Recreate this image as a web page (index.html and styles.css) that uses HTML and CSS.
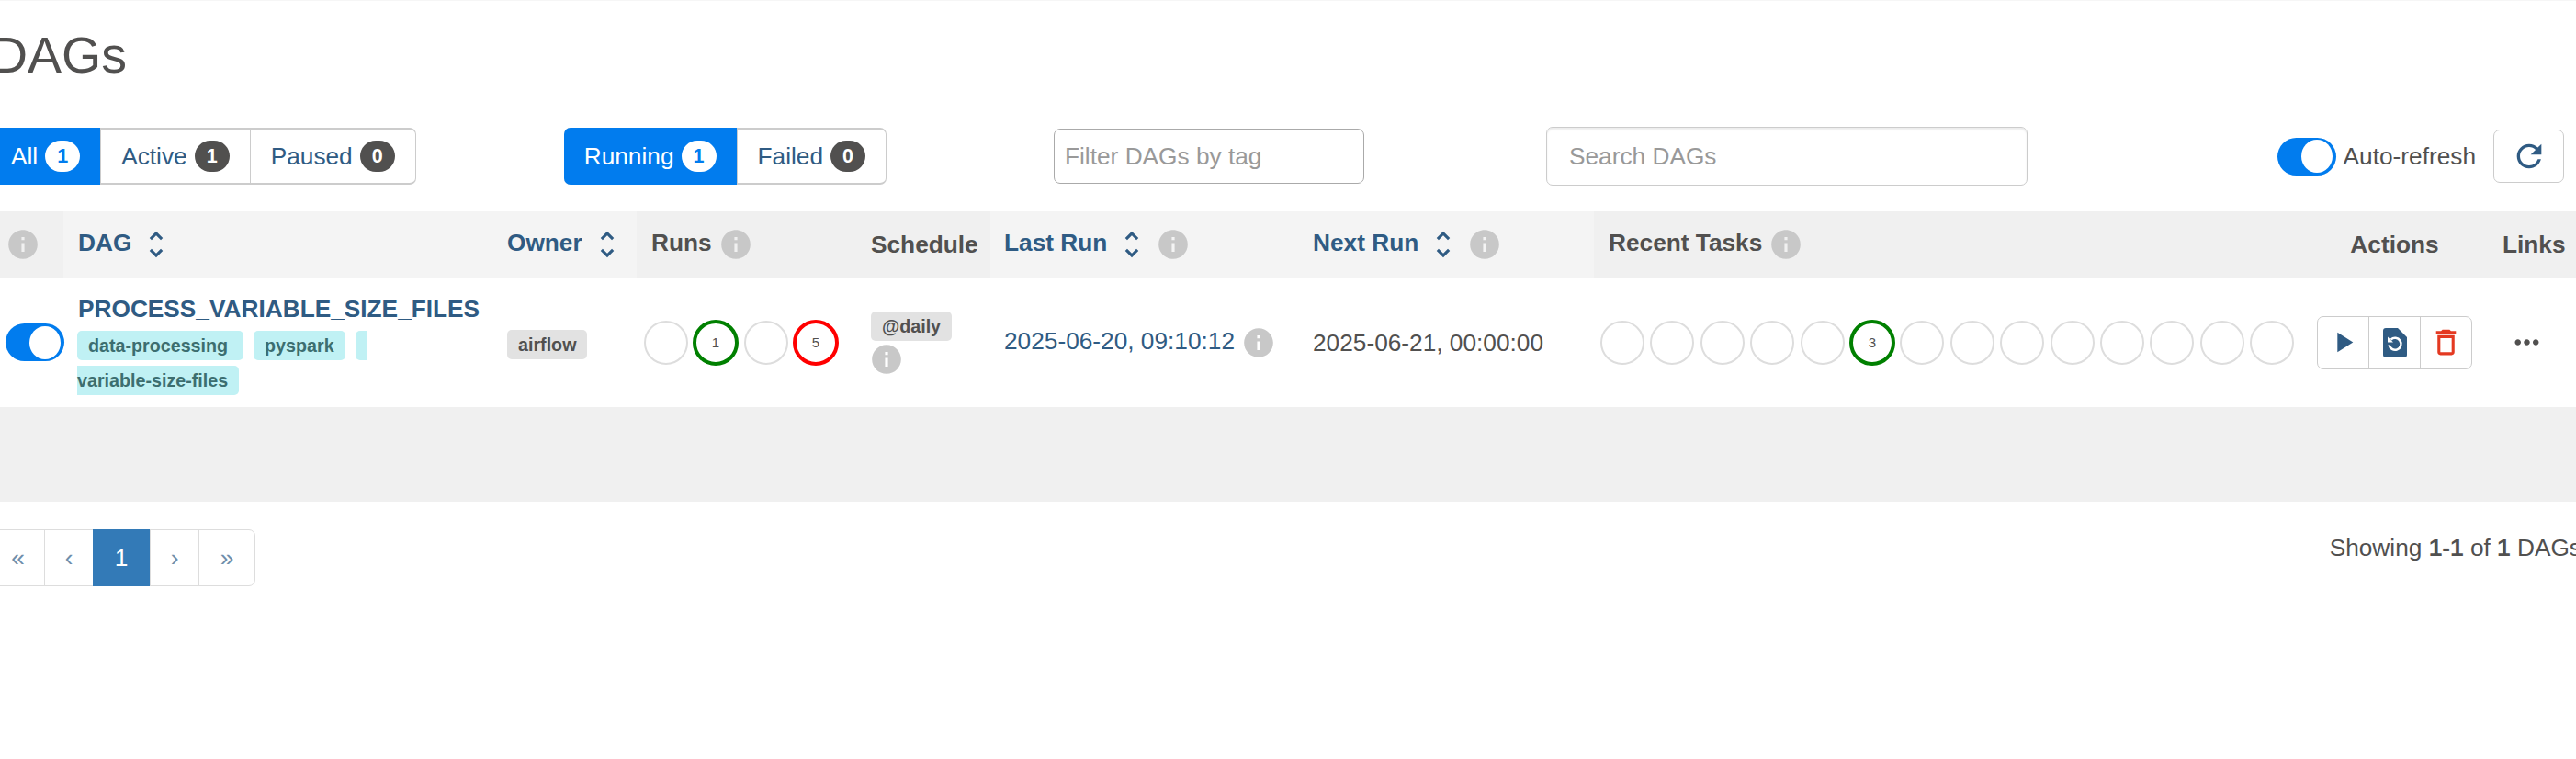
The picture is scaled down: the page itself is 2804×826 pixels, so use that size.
FILE: index.html
```html
<!DOCTYPE html>
<html lang="en">
<head>
    <meta charset="utf-8" />
    <title>DAGs</title>
    <link rel="stylesheet" href="styles.css">
</head>
<body>
    <svg class="defs" width="0" height="0">
        <symbol id="i-info" viewBox="0 0 24 24"><path fill-rule="evenodd" d="M12 2C6.48 2 2 6.48 2 12s4.48 10 10 10 10-4.48 10-10S17.52 2 12 2zm1 15h-2v-6h2v6zm0-8h-2V7h2v2z" /></symbol>
        <symbol id="i-sort" viewBox="0 0 24 24"><path d="M12 5.83L15.17 9l1.41-1.41L12 3 7.41 7.59 8.83 9 12 5.83zm0 12.34L8.83 15l-1.41 1.41L12 21l4.59-4.59L15.17 15 12 18.17z" /></symbol>
    </svg>
    <main class="page">
        <h2 class="title">DAGs</h2>
        <div class="toolbar">
            <div class="btn-group status-group">
                <a class="btn active">All <span class="count">1</span></a>
                <a class="btn">Active <span class="count">1</span></a>
                <a class="btn">Paused <span class="count">0</span></a>
            </div>
            <div class="btn-group state-group">
                <a class="btn active">Running <span class="count">1</span></a>
                <a class="btn">Failed <span class="count">0</span></a>
            </div>
            <input class="input tag-filter" placeholder="Filter DAGs by tag">
            <input class="input dag-search" placeholder="Search DAGs">
            <label class="auto-refresh"><span class="switch"><span class="knob"></span></span>Auto-refresh</label>
            <a class="refresh-btn">
                <svg width="40" height="40" viewBox="0 0 24 24"><path d="M17.65 6.35A7.958 7.958 0 0012 4c-4.42 0-7.99 3.58-7.99 8s3.57 8 7.99 8c3.73 0 6.84-2.55 7.73-6h-2.08A5.99 5.99 0 0112 18c-3.31 0-6-2.69-6-6s2.69-6 6-6c1.66 0 3.14.69 4.22 1.78L13 11h7V4l-2.35 2.35z" /></svg>
            </a>
        </div>
        <table class="dags">
            <colgroup>
                <col class="c-toggle"><col class="c-dag"><col class="c-owner"><col class="c-runs"><col class="c-schedule">
                <col class="c-last"><col class="c-next"><col class="c-tasks"><col class="c-actions"><col class="c-links">
            </colgroup>
            <thead>
                <tr>
                    <th><svg class="info"><use href="#i-info" /></svg></th>
                    <th class="sortable"><a>DAG</a><svg class="sort"><use href="#i-sort" /></svg></th>
                    <th class="sortable"><a>Owner</a><svg class="sort"><use href="#i-sort" /></svg></th>
                    <th>Runs<svg class="info"><use href="#i-info" /></svg></th>
                    <th class="plain">Schedule</th>
                    <th class="sortable run-col"><a>Last Run</a><svg class="sort"><use href="#i-sort" /></svg><svg class="info"><use href="#i-info" /></svg></th>
                    <th class="sortable run-col"><a>Next Run</a><svg class="sort"><use href="#i-sort" /></svg><svg class="info"><use href="#i-info" /></svg></th>
                    <th>Recent Tasks<svg class="info"><use href="#i-info" /></svg></th>
                    <th class="plain centered">Actions</th>
                    <th class="plain">Links</th>
                </tr>
            </thead>
            <tbody>
                <tr>
                    <td><span class="switch"><span class="knob"></span></span></td>
                    <td class="dag-cell">
                        <a class="dag-name">PROCESS_VARIABLE_SIZE_FILES</a>
                        <div class="tags">
                            <span class="tag tag-wide">data-processing</span>
                            <span class="tag">pyspark</span>
                            <span class="tag tag-start"></span>
                            <span class="tag tag-end">variable-size-files</span>
                        </div>
                    </td>
                    <td><span class="label">airflow</span></td>
                    <td class="states">
                        <div class="circles">
                            <svg class="state" viewBox="0 0 50 50"><circle class="idle" cx="25" cy="25" r="23" /></svg>
                            <svg class="state" viewBox="0 0 50 50"><circle class="success" cx="25" cy="25" r="23" /><text x="25" y="30">1</text></svg>
                            <svg class="state" viewBox="0 0 50 50"><circle class="idle" cx="25" cy="25" r="23" /></svg>
                            <svg class="state" viewBox="0 0 50 50"><circle class="failed" cx="25" cy="25" r="23" /><text x="25" y="30">5</text></svg>
                        </div>
                    </td>
                    <td class="schedule-cell"><span class="label">@daily</span><svg class="info"><use href="#i-info" /></svg></td>
                    <td class="date"><a>2025-06-20, 09:10:12</a><svg class="info"><use href="#i-info" /></svg></td>
                    <td class="date">2025-06-21, 00:00:00</td>
                    <td class="states tasks">
                        <div class="circles">
                            <svg class="state" viewBox="0 0 50 50"><circle class="idle" cx="25" cy="25" r="23" /></svg>
                            <svg class="state" viewBox="0 0 50 50"><circle class="idle" cx="25" cy="25" r="23" /></svg>
                            <svg class="state" viewBox="0 0 50 50"><circle class="idle" cx="25" cy="25" r="23" /></svg>
                            <svg class="state" viewBox="0 0 50 50"><circle class="idle" cx="25" cy="25" r="23" /></svg>
                            <svg class="state" viewBox="0 0 50 50"><circle class="idle" cx="25" cy="25" r="23" /></svg>
                            <svg class="state" viewBox="0 0 50 50"><circle class="success" cx="25" cy="25" r="23" /><text x="25" y="30">3</text></svg>
                            <svg class="state" viewBox="0 0 50 50"><circle class="idle" cx="25" cy="25" r="23" /></svg>
                            <svg class="state" viewBox="0 0 50 50"><circle class="idle" cx="25" cy="25" r="23" /></svg>
                            <svg class="state" viewBox="0 0 50 50"><circle class="idle" cx="25" cy="25" r="23" /></svg>
                            <svg class="state" viewBox="0 0 50 50"><circle class="idle" cx="25" cy="25" r="23" /></svg>
                            <svg class="state" viewBox="0 0 50 50"><circle class="idle" cx="25" cy="25" r="23" /></svg>
                            <svg class="state" viewBox="0 0 50 50"><circle class="idle" cx="25" cy="25" r="23" /></svg>
                            <svg class="state" viewBox="0 0 50 50"><circle class="idle" cx="25" cy="25" r="23" /></svg>
                            <svg class="state" viewBox="0 0 50 50"><circle class="idle" cx="25" cy="25" r="23" /></svg>
                        </div>
                    </td>
                    <td class="actions-cell">
                        <div class="actions">
                            <a><svg class="play" width="37" height="37" viewBox="0 0 24 24"><path d="M8 5v14l11-7z" /></svg></a>
                            <a>
                                <svg class="play" width="26" height="32" viewBox="0 0 26 32">
                                    <path d="M3 0h13l10 10v19a3 3 0 0 1-3 3H3a3 3 0 0 1-3-3V3a3 3 0 0 1 3-3z" />
                                    <path class="replay" d="M8.5 12.6a6.5 6.5 0 1 1-1.9 5.8" />
                                    <path class="replay-head" d="M5 9.5v6h6z" />
                                </svg>
                            </a>
                            <a><svg class="trash" width="37" height="37" viewBox="0 0 24 24"><path d="M6 19c0 1.1.9 2 2 2h8c1.1 0 2-.9 2-2V7H6v12zM8 9h8v10H8V9zm7.5-5l-1-1h-5l-1 1H5v2h14V4h-3.5z" /></svg></a>
                        </div>
                    </td>
                    <td class="links-cell">
                        <svg class="more" width="39" height="39" viewBox="0 0 24 24"><path d="M6 10c-1.1 0-2 .9-2 2s.9 2 2 2 2-.9 2-2-.9-2-2-2zm12 0c-1.1 0-2 .9-2 2s.9 2 2 2 2-.9 2-2-.9-2-2-2zm-6 0c-1.1 0-2 .9-2 2s.9 2 2 2 2-.9 2-2-.9-2-2-2z" /></svg>
                    </td>
                </tr>
                <tr class="empty-row"><td colspan="10"></td></tr>
            </tbody>
        </table>
        <div class="table-foot">
            <ul class="pagination">
                <li>«</li>
                <li>‹</li>
                <li class="current">1</li>
                <li>›</li>
                <li class="last">»</li>
            </ul>
            <p class="showing">Showing <b>1-1</b> of <b>1</b> DAGs</p>
        </div>
    </main>
</body>
</html>
```

FILE: styles.css
```css
html, body {
    margin: 0;
    padding: 0;
    overflow: hidden;
    background: #fff;
}

body {
    height: 826px;
    border-top: 1px solid #f6f6f6;
    box-sizing: border-box;
    color: #51504f;
    font: 26.25px/36px "Liberation Sans", Arial, sans-serif;
}

a {
    color: #2f5b83;
    text-decoration: none;
}

.defs {
    position: absolute;
}

.page {
    width: 2817px;
    margin-left: -10px;
}

.title {
    margin: 0;
    padding-top: 27px;
    height: 123px;
    box-sizing: border-box;
    font-size: 55.5px;
    font-weight: 400;
    line-height: 64px;
}

/* toolbar */
.toolbar {
    display: flex;
    align-items: center;
    height: 92px;
    margin-bottom: 14px;
    padding-right: 16px;
}

.btn-group {
    display: flex;
    height: 62px;
    box-sizing: border-box;
    border: 1px solid #ccc;
    border-width: 2px 1px;
    border-radius: 7px;
}

.status-group {
    margin-left: -1px;
}

.state-group {
    margin-left: 161px;
}

.btn {
    display: flex;
    align-items: center;
    gap: 8px;
    padding: 0 22px;
    border-left: 1px solid #ccc;
}

.btn:first-child {
    border-left: 0;
}

.btn.active {
    margin: -2px 0;
    background: #017cee;
    color: #fff;
}

.state-group .btn.active {
    margin-left: -1px;
    border-radius: 7px 0 0 7px;
}

.count {
    min-width: 38px;
    height: 34px;
    border-radius: 19px;
    background: #51504f;
    color: #fff;
    font-size: 21.5px;
    font-weight: 700;
    line-height: 34px;
    text-align: center;
}

.active .count {
    background: #fff;
    color: #017cee;
}

.input {
    box-sizing: border-box;
    border: 1px solid #aaa;
    border-radius: 7px;
    color: #51504f;
    font: 26.25px "Liberation Sans", Arial, sans-serif;
    outline: 0;
}

.input::placeholder {
    color: #999;
    opacity: 1;
}

.tag-filter {
    width: 338px;
    height: 60px;
    padding: 0 11px;
    margin-left: 182px;
}

.dag-search {
    width: 524px;
    height: 64px;
    padding: 0 24px;
    margin-left: 198px;
    border-color: #ccc;
    box-shadow: inset 0 2px 2px rgba(0, 0, 0, 0.08);
}

.auto-refresh {
    display: flex;
    align-items: center;
    gap: 8px;
    margin-left: auto;
}

.switch {
    display: inline-flex;
    justify-content: flex-end;
    align-items: center;
    width: 64px;
    height: 41px;
    padding-right: 4px;
    box-sizing: border-box;
    border-radius: 21px;
    background: #017cee;
    vertical-align: middle;
}

.knob {
    width: 34px;
    height: 36px;
    border-radius: 50%;
    background: #fff;
}

.refresh-btn {
    display: flex;
    align-items: center;
    justify-content: center;
    width: 77px;
    height: 58px;
    margin-left: 19px;
    box-sizing: border-box;
    border: 1px solid #ccc;
    border-radius: 7px;
    fill: #2f5b83;
}

/* table */
.dags {
    width: 100%;
    table-layout: fixed;
    border-collapse: collapse;
}

.c-toggle { width: 79px; }
.c-dag { width: 467px; }
.c-owner { width: 157px; }
.c-runs { width: 239px; }
.c-schedule { width: 146px; }
.c-last { width: 336px; }
.c-next { width: 321px; }
.c-tasks { width: 770px; }
.c-actions { width: 203px; }
.c-links { width: 99px; }

.dags th {
    box-sizing: border-box;
    height: 72px;
    padding: 0 0 4px 16px;
    background: #f0f0f0;
    font-weight: 700;
    text-align: left;
    white-space: nowrap;
}

.dags th.sortable {
    background: #f4f4f4;
}

.dags th.run-col {
    padding-left: 15px;
}

.dags th.plain {
    padding-bottom: 0;
}

.dags th.centered {
    padding-left: 0;
    text-align: center;
}

th svg, td svg {
    vertical-align: middle;
}

th svg {
    margin-top: -6px;
    margin-bottom: -6px;
}

.info {
    width: 38px;
    height: 38px;
    margin-left: 7px;
    fill: #c8c8c8;
}

th:first-child .info {
    margin-left: 0;
}

.sort {
    width: 38px;
    height: 38px;
    margin-left: 8px;
    fill: #2f5b83;
}

.sort + .info {
    margin-left: 7px;
}

.dags td {
    padding: 0 0 0 16px;
    vertical-align: middle;
}

.dags td.dag-cell {
    box-sizing: border-box;
    height: 141px;
    padding-top: 3px;
}

.dag-name {
    display: block;
    font-weight: 700;
    line-height: 36px;
}

.tags {
    display: flex;
    flex-wrap: wrap;
    gap: 6px 11px;
    margin: 6px 0 0 -1px;
}

.tag, .label {
    box-sizing: border-box;
    height: 32px;
    padding: 0 12px;
    border-radius: 5px;
    font-size: 19.7px;
    font-weight: 700;
    line-height: 32px;
}

.tag {
    background: #c0f1f4;
    color: #3c6e70;
}

.tag-wide {
    padding-right: 17px;
}

.tag-start {
    width: 12px;
    padding: 0;
    border-radius: 5px 0 0 5px;
}

.tag-end {
    padding-left: 0;
    border-radius: 0 5px 5px 0;
}

.label {
    display: inline-block;
    background: #e2e2e2;
    color: #51504f;
}

.dags td.states {
    padding-left: 7px;
}

.dags td.tasks {
    padding-left: 6px;
}

.circles {
    display: flex;
    gap: 4.4px;
}

.state {
    width: 50px;
    height: 50px;
}

.state circle {
    fill: #fff;
    stroke-width: 2px;
}

.state .idle {
    stroke: #ddd;
}

.state .success {
    stroke: #008000;
    stroke-width: 4px;
}

.state .failed {
    stroke: #f00;
    stroke-width: 4px;
}

.state text {
    fill: #51504f;
    font-size: 15px;
    text-anchor: middle;
}

.schedule-cell .info {
    display: block;
    margin: 1px 0 0 -2px;
}

.dags td.date {
    padding-left: 15px;
    white-space: nowrap;
}

.dags td.actions-cell {
    padding-left: 0;
    text-align: center;
}

.actions {
    display: inline-flex;
    height: 58px;
    box-sizing: border-box;
    border: 1px solid #ccc;
    border-radius: 7px;
    vertical-align: middle;
}

.actions a {
    display: flex;
    align-items: center;
    justify-content: center;
    width: 55px;
    border-left: 1px solid #ccc;
}

.actions a:first-child {
    border-left: 0;
}

.play {
    fill: #2f5b83;
}

.replay {
    fill: none;
    stroke: #fff;
    stroke-width: 2.6px;
}

.replay-head {
    fill: #fff;
}

.trash {
    fill: #e43921;
}

.dags td.links-cell {
    padding-left: 23px;
}

.more {
    fill: #51504f;
}

.empty-row td {
    height: 103px;
    background: #f0f0f0;
}

/* footer */
.table-foot {
    display: flex;
    justify-content: space-between;
    align-items: flex-start;
    margin-top: 30px;
}

.pagination {
    display: flex;
    height: 62px;
    margin: 0;
    padding: 0;
    box-sizing: border-box;
    border: 1px solid #ddd;
    border-radius: 7px;
    list-style: none;
    color: #6e8eab;
    line-height: 60px;
    text-align: center;
}

.pagination li {
    width: 52px;
    border-left: 1px solid #ddd;
}

.pagination li:first-child {
    width: 57px;
    border-left: 0;
}

.pagination .current {
    width: 62px;
    margin: -1px 0;
    background: #337ab7;
    border-left: 0;
    color: #fff;
    line-height: 62px;
}

.pagination .last {
    width: 60px;
}

.showing {
    margin: 2px -3px 0 0;
    line-height: 36px;
}
```
